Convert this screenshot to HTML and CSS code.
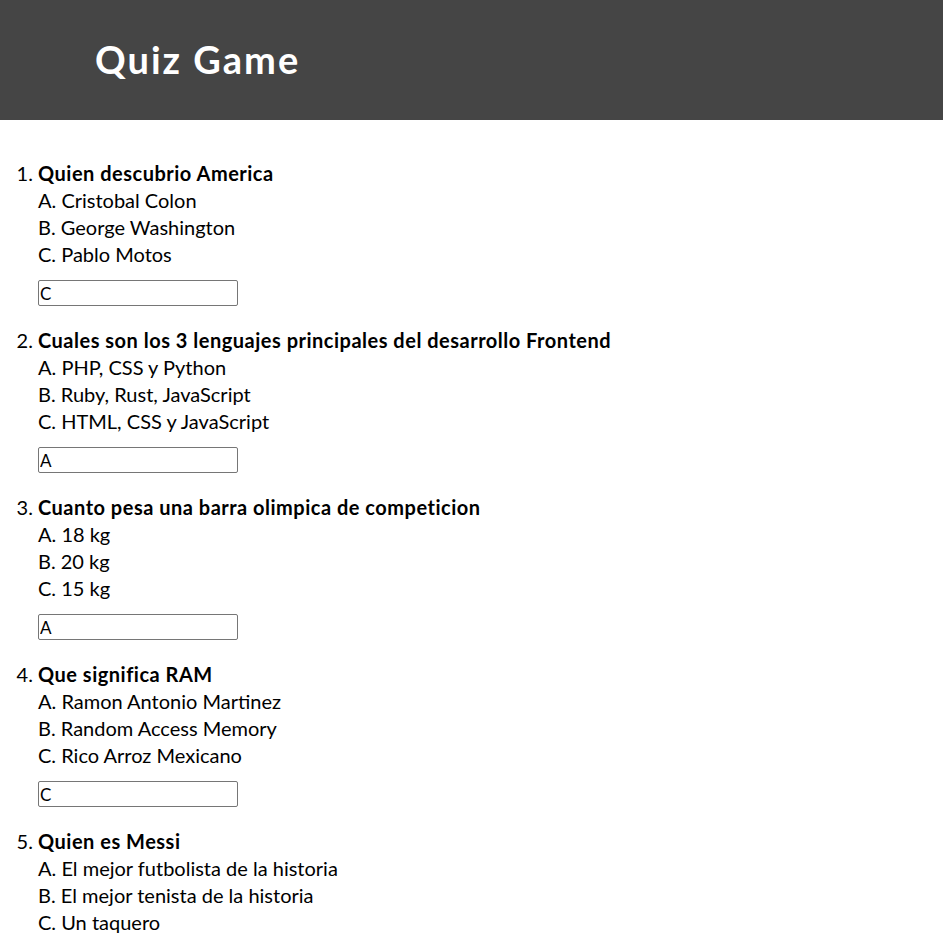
FILE: index.html
```html
<!DOCTYPE html>
<html lang="es">
<head>
<meta charset="utf-8">
<title>Quiz Game</title>
<link rel="stylesheet" href="styles.css">
</head>
<body>
<header class="top">
  <h1 class="title">Quiz Game</h1>
</header>
<main class="quiz">
  <ol class="questions">
    <li class="question">
      <span class="q-text">Quien descubrio America</span>
      <div class="opt">A. Cristobal Colon</div>
      <div class="opt">B. George Washington</div>
      <div class="opt">C. Pablo Motos</div>
      <input class="answer" type="text" value="C">
    </li>
    <li class="question">
      <span class="q-text">Cuales son los 3 lenguajes principales del desarrollo Frontend</span>
      <div class="opt">A. PHP, CSS y Python</div>
      <div class="opt">B. Ruby, Rust, JavaScript</div>
      <div class="opt">C. HTML, CSS y JavaScript</div>
      <input class="answer" type="text" value="A">
    </li>
    <li class="question">
      <span class="q-text">Cuanto pesa una barra olimpica de competicion</span>
      <div class="opt">A. 18 kg</div>
      <div class="opt">B. 20 kg</div>
      <div class="opt">C. 15 kg</div>
      <input class="answer" type="text" value="A">
    </li>
    <li class="question">
      <span class="q-text">Que significa RAM</span>
      <div class="opt">A. Ramon Antonio Martinez</div>
      <div class="opt">B. Random Access Memory</div>
      <div class="opt">C. Rico Arroz Mexicano</div>
      <input class="answer" type="text" value="C">
    </li>
    <li class="question">
      <span class="q-text">Quien es Messi</span>
      <div class="opt">A. El mejor futbolista de la historia</div>
      <div class="opt">B. El mejor tenista de la historia</div>
      <div class="opt">C. Un taquero</div>
      <input class="answer" type="text" value="A">
    </li>
  </ol>
</main>
</body>
</html>
```
FILE: styles.css
```css
html, body {
  margin: 0;
  padding: 0;
  background: #ffffff;
}
body {
  font-family: Lato, "Open Sans", sans-serif;
  color: #000000;
}
.top {
  background: #454545;
  height: 120px;
  display: flex;
  align-items: center;
  padding-left: 95px;
  box-sizing: border-box;
}
.title {
  margin: 0;
  color: #ffffff;
  font-size: 38px;
  font-weight: 700;
  letter-spacing: 2px;
  line-height: 1;
  padding-bottom: 2px;
}
.quiz {
  padding-top: 40px;
}
.questions {
  margin: 0;
  padding-left: 38px;
  font-size: 20px;
  line-height: 27px;
}
.question {
  margin-bottom: 21px;
}
.q-text {
  font-weight: 700;
  letter-spacing: 0.5px;
}
.opt {
  font-weight: 400;
}
.answer {
  display: block;
  margin-top: 12px;
  width: 200px;
  height: 26px;
  box-sizing: border-box;
  border: 1px solid #767676;
  border-radius: 2px;
  padding: 0 1px;
  font-family: Lato, "Open Sans", sans-serif;
  font-size: 17px;
  color: #000;
}
```
